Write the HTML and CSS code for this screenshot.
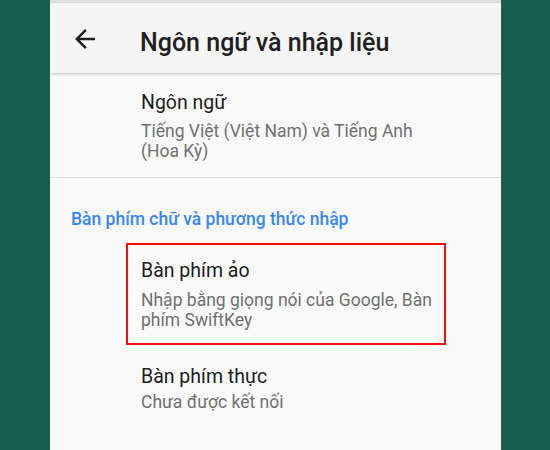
FILE: index.html
```html
<!DOCTYPE html>
<html lang="vi">
<head>
    <meta charset="UTF-8">
    <meta name="viewport" content="width=device-width, initial-scale=1.0">
    <title>Ngôn ngữ và nhập liệu</title>
    <link rel="stylesheet" href="styles.css">
</head>
<body>
    <div class="screen">
        <div class="status"></div>
        <header class="appbar">
            <button class="back" aria-label="Quay lại">
                <svg width="30" height="30" viewBox="0 0 24 24">
                    <path d="M20 11H7.83l5.59-5.59L12 4l-8 8 8 8 1.41-1.41L7.83 13H20v-2z" fill="#212121"/>
                </svg>
            </button>
            <h1>Ngôn ngữ và nhập liệu</h1>
        </header>

        <div class="item first">
            <div class="item-title">Ngôn ngữ</div>
            <div class="item-sub">Tiếng Việt (Việt Nam) và Tiếng Anh (Hoa Kỳ)</div>
        </div>

        <h2 class="section">Bàn phím chữ và phương thức nhập</h2>

        <div class="item boxed">
            <div class="item-title">Bàn phím ảo</div>
            <div class="item-sub">Nhập bằng giọng nói của Google, Bàn phím SwiftKey</div>
        </div>

        <div class="item last">
            <div class="item-title">Bàn phím thực</div>
            <div class="item-sub">Chưa được kết nối</div>
        </div>
    </div>
</body>
</html>
```

FILE: styles.css
```css
body {
    margin: 0;
    background-color: #175e51;
    font-family: Roboto, "Noto Sans", sans-serif;
}
.screen {
    width: 451px;
    height: 450px;
    margin-left: 50px;
    background-color: #fafafa;
    overflow: hidden;
}
.status {
    height: 3px;
    background-color: #e0e0e0;
}
.appbar {
    display: flex;
    align-items: center;
    height: 70px;
    background-color: #f5f5f5;
    box-shadow: 0 1px 3px rgba(0, 0, 0, 0.25);
    position: relative;
}
.back {
    width: 30px;
    height: 30px;
    padding: 0;
    margin: 2px 0 0 20px;
    border: none;
    background: none;
}
.back svg {
    display: block;
}
.appbar h1 {
    margin: 0 0 0 40px;
    padding-top: 9px;
    font-size: 25px;
    font-weight: 500;
    color: #212121;
}
.item {
    padding-left: 91px;
}
.item-title {
    font-size: 19.5px;
    line-height: 24px;
    color: #1c1c1c;
}
.item-sub {
    width: 300px;
    font-size: 17.5px;
    line-height: 20px;
    color: #707070;
}
.first {
    padding-top: 18px;
    padding-bottom: 16px;
    border-bottom: 1px solid #e0e0e0;
}
.first .item-sub {
    margin-top: 6px;
}
.section {
    margin: 0;
    padding: 31px 0 0 21px;
    font-size: 17.5px;
    line-height: 20px;
    font-weight: 500;
    color: #3a86f3;
}
.boxed {
    width: 303px;
    margin: 14px 0 0 76px;
    padding: 14px 0 13px 13px;
    border: 2px solid #ee1111;
}
.boxed .item-sub {
    margin-top: 7px;
}
.last {
    padding-top: 20px;
}
.last .item-sub {
    margin-top: 3px;
}
```
